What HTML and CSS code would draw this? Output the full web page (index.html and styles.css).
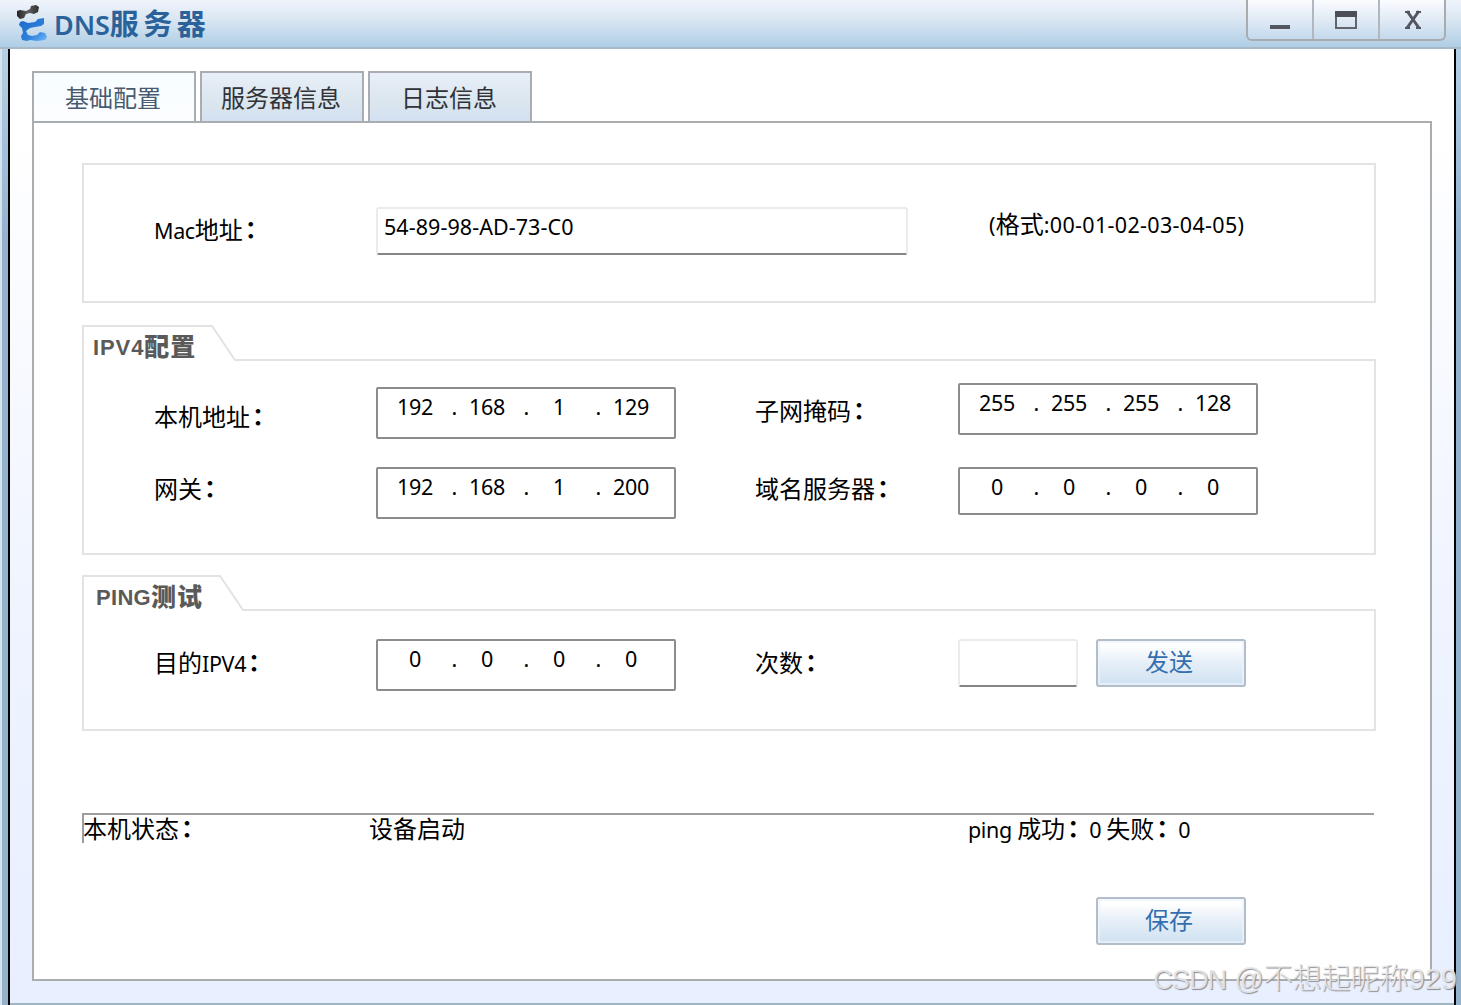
FILE: index.html
```html
<!DOCTYPE html>
<html lang="zh-CN">
<head>
<meta charset="utf-8">
<title>DNS服务器</title>
<link rel="stylesheet" href="styles.css">
</head>
<body>
<div class="window">
  <header class="titlebar">
    <svg class="logo" width="34" height="40" viewBox="0 0 34 40">
      <defs>
        <linearGradient id="dark" x2="1" y2="0"><stop stop-color="#242424"/><stop offset=".5" stop-color="#606060"/><stop offset="1" stop-color="#303030"/></linearGradient>
        <linearGradient id="blue" x2="1" y2="1"><stop stop-color="#1b69c8"/><stop offset=".6" stop-color="#2d80da"/><stop offset="1" stop-color="#72bafc"/></linearGradient>
      </defs>
      <path d="M0 8l3-1 6 1 4-2 1-3 5-1 3 2-1 5-4 2-4-1-4 1-2 4-4 1-3-3z" fill="url(#dark)"/>
      <path d="M3 19l3-1 5 2 7-1 3-3 6-1v6l-3 2-6 1-5 1-4 3 2 4 4 1 5-1 3-3 5 1 2 4-2 3-8 1-7-1-3 1-5-1-1-4 2-3-1-5-3-3z" fill="url(#blue)"/>
    </svg>
    <h1 class="title"><span class="title-latin">DNS</span>服务器</h1>
    <div class="controls">
      <button class="control" aria-label="最小化"><svg width="20" height="24" viewBox="0 0 20 24"><path d="M0 18h20v4H0z" fill="#54565f"/></svg></button>
      <button class="control" aria-label="最大化"><svg width="22" height="24" viewBox="0 0 22 24"><path d="M1 5h20v16H1z" fill="none" stroke="#63656e" stroke-width="2"/><path d="M0 4h22v6H0z" fill="#4c4d57"/></svg></button>
      <button class="control" aria-label="关闭"><svg width="18" height="24" viewBox="0 0 18 24"><path d="M3 4l12 17M15 4L3 21" stroke="#53565f" stroke-width="3"/><path d="M1 5h5M12 5h5M1 21h5M12 21h5" stroke="#53565f" stroke-width="2"/></svg></button>
    </div>
  </header>
  <main class="client">
    <nav class="tabs">
      <a class="tab tab-active">基础配置</a>
      <a class="tab">服务器信息</a>
      <a class="tab">日志信息</a>
    </nav>
    <div class="panel">
      <section class="group group-mac">
        <label class="label"><span class="latin">Mac</span>地址<span class="colon">：</span></label>
        <div class="edit edit-mac">54-89-98-AD-73-C0</div>
        <div class="hint"><span class="latin">(</span>格式<span class="latin">:00-01-02-03-04-05)</span></div>
      </section>

      <section class="tabbed">
        <div class="group-head">
          <h2 class="caption caption-ipv4"><span class="caption-latin">IPV4</span>配置</h2>
          <svg class="slope" width="25" height="36" viewBox="0 0 25 36"><path d="M0 1h1l23 34h1" fill="none" stroke="#e3e3e3" stroke-width="2"/></svg>
          <div class="head-rule"></div>
        </div>
        <div class="group-body body-ipv4">
          <label class="label label-host">本机地址<span class="colon">：</span></label>
          <div class="ip"><b>192</b><i>.</i><b>168</b><i>.</i><b>1</b><i>.</i><b>129</b></div>
          <label class="label label-mask">子网掩码<span class="colon">：</span></label>
          <div class="ip ip-mask"><b>255</b><i>.</i><b>255</b><i>.</i><b>255</b><i>.</i><b>128</b></div>
          <label class="label">网关<span class="colon">：</span></label>
          <div class="ip"><b>192</b><i>.</i><b>168</b><i>.</i><b>1</b><i>.</i><b>200</b></div>
          <label class="label">域名服务器<span class="colon">：</span></label>
          <div class="ip ip-dns"><b>0</b><i>.</i><b>0</b><i>.</i><b>0</b><i>.</i><b>0</b></div>
        </div>
      </section>

      <section class="tabbed tabbed-ping">
        <div class="group-head">
          <h2 class="caption caption-ping"><span class="caption-latin">PING</span>测试</h2>
          <svg class="slope" width="25" height="36" viewBox="0 0 25 36"><path d="M0 1h1l23 34h1" fill="none" stroke="#e3e3e3" stroke-width="2"/></svg>
          <div class="head-rule"></div>
        </div>
        <div class="group-body body-ping">
          <label class="label">目的<span class="latin">IPV4</span><span class="colon">：</span></label>
          <div class="ip"><b>0</b><i>.</i><b>0</b><i>.</i><b>0</b><i>.</i><b>0</b></div>
          <label class="label">次数<span class="colon">：</span></label>
          <div class="send">
            <div class="edit edit-count"></div>
            <button class="button">发送</button>
          </div>
        </div>
      </section>

      <div class="status">
        <span class="status-name">本机状态<span class="colon">：</span></span>
        <span class="status-value">设备启动</span>
        <span class="status-ping"><span class="latin">ping </span>成功<span class="colon">：</span><span class="latin">0 </span>失败<span class="colon">：</span><span class="latin">0</span></span>
      </div>
      <button class="button button-save">保存</button>
    </div>
  </main>
  <div class="watermark"><span class="watermark-site">CSDN</span> @不想起昵称929</div>
</div>
</body>
</html>
```
FILE: styles.css
```css
* {
  box-sizing: border-box;
}

body {
  margin: 0;
  font: 24px/28px "Noto Sans CJK SC", sans-serif;
  color: #000;
}

.window {
  position: relative;
  width: 1461px;
  height: 1005px;
  overflow: hidden;
  display: flex;
  flex-direction: column;
  padding: 0 5px 0 8px;
  background:
    linear-gradient(90deg, #d5e2ec 0 2px, transparent 2px),
    linear-gradient(#edf3fb 0, #b4d0e7 47px, #92b2cf 240px, #94b2cb 100%);
}

.titlebar {
  flex: none;
  display: flex;
  align-items: flex-start;
  height: 49px;
  margin: 0 -5px 0 -8px;
  padding: 0 15px 0 17px;
  border-bottom: 2px solid #a8b9c8;
  background: linear-gradient(#f0f4fb 0, #d9e6f2 20px, #afcee6 100%);
}

.logo {
  flex: none;
  margin-top: 3px;
}

.title {
  flex: 1;
  margin: 4px 0 0 3px;
  font-size: 29px;
  line-height: 36px;
  font-weight: 700;
  letter-spacing: 4.5px;
  color: #2b6299;
}

.title-latin {
  font-family: "Noto Sans", sans-serif;
  font-size: 27px;
  font-weight: 600;
  letter-spacing: -.1px;
}

.controls {
  display: flex;
  height: 41px;
  border: 2px solid #a9abae;
  border-top: 0;
  border-radius: 0 0 6px 6px;
  background: linear-gradient(#fbfcfe, #e0eaf5 20px, #c3d9ed);
}

.control {
  display: flex;
  justify-content: center;
  width: 66px;
  padding: 7px 0 0;
  border: 0;
  border-right: 2px solid #b0b7c0;
  background: none;
}

.control:last-child {
  width: 64px;
  padding-left: 2px;
  border-right: 0;
}

.client {
  flex: none;
  height: 956px;
  padding: 22px 22px 0;
  border: solid #000;
  border-width: 0 2px;
  box-shadow: inset 0 -2px #a1b5c3;
  background: linear-gradient(#fff 80px, #eef3ff 600px, #e8efff);
}

.tabs {
  display: flex;
  gap: 4px;
}

.tab {
  width: 164px;
  height: 50px;
  padding-right: 2px;
  border: 2px solid #a9adb1;
  border-bottom: 0;
  line-height: 47px;
  text-align: center;
  color: #303338;
  background: linear-gradient(#e8eff9, #dbe6ee 60%, #d3e0f2);
}

.tab-active {
  color: #475a70;
  background: linear-gradient(#f7fdff, #fcfdff);
}

.panel {
  width: 1400px;
  height: 860px;
  padding: 40px 54px 0 48px;
  border: 2px solid #a9adb0;
  background: #fff;
}

.latin,
.edit,
.ip {
  font-family: "Noto Sans", sans-serif;
  font-size: 21.5px;
  letter-spacing: -.35px;
}

.label {
  white-space: nowrap;
}

.colon {
  position: relative;
  top: -1px;
  left: 2px;
  font-weight: 700;
}

.group {
  display: grid;
  grid-template-columns: 222px 613px 1fr;
  align-items: start;
  width: 1294px;
  height: 140px;
  padding: 42px 0 0 70px;
  border: 2px solid #e3e3e3;
}

.group-mac .label {
  margin-top: 8px;
}

.hint {
  margin-top: 2px;
  white-space: nowrap;
}

.hint .latin {
  letter-spacing: .32px;
}

.edit {
  height: 48px;
  padding: 4px 6px;
  border: 2px solid #ebebeb;
  border-bottom-color: #858585;
  border-radius: 3px;
  background: #fff;
}

.edit-mac {
  width: 532px;
  letter-spacing: .07px;
}

.tabbed {
  width: 1294px;
  height: 230px;
  margin-top: 22px;
  display: flex;
  flex-direction: column;
}

.tabbed-ping {
  height: 156px;
  margin-top: 20px;
}

.group-head {
  display: flex;
  height: 36px;
}

.caption {
  margin: 0;
  padding: 4px 0 0 9px;
  border: solid #e3e3e3;
  border-width: 2px 0 0 2px;
  font-size: 25px;
  line-height: 29px;
  font-weight: 900;
  letter-spacing: 1px;
  color: #5a5a5a;
  white-space: nowrap;
}

.caption-ipv4 {
  width: 129px;
}

.caption-ping {
  width: 137px;
  padding-left: 12px;
}

.caption-latin {
  position: relative;
  top: -1px;
  font-family: "Liberation Sans", Arial, sans-serif;
  font-size: 22px;
  font-weight: 700;
  letter-spacing: .9px;
}

.caption-ping .caption-latin {
  letter-spacing: .3px;
}

.head-rule {
  flex: 1;
  border-bottom: 2px solid #e3e3e3;
}

.group-body {
  flex: 1;
  display: grid;
  grid-template-columns: 222px 379px 203px 1fr;
  align-items: start;
  padding-left: 70px;
  border: 2px solid #e3e3e3;
  border-top: 0;
}

.body-ipv4 {
  grid-template-rows: 80px 1fr;
  padding-top: 26px;
}

.body-ping {
  padding-top: 28px;
}

.group-body .label {
  margin-top: 7px;
}

.body-ping .label {
  margin-top: 9px;
}

.group-body .label-host {
  margin-top: 15px;
}

.group-body .label-mask {
  margin-top: 9px;
}

.ip {
  display: flex;
  width: 300px;
  height: 52px;
  padding-left: 7px;
  border: 2px solid #8c8c8c;
  border-radius: 2px;
  line-height: 35px;
}

.ip b {
  width: 60px;
  font-weight: 400;
  text-align: center;
}

.ip i {
  width: 12px;
  font-style: normal;
  text-align: right;
}

.ip-mask {
  margin-top: -4px;
}

.ip-dns {
  height: 48px;
}

.send {
  display: flex;
  gap: 18px;
}

.edit-count {
  width: 120px;
}

.button {
  width: 150px;
  height: 48px;
  padding: 0 4px 4px 0;
  border: 2px solid #b3bdc9;
  border-radius: 3px;
  box-shadow: inset 0 0 0 2px rgba(235, 243, 251, .7);
  font: 24px/40px "Noto Sans CJK SC", sans-serif;
  color: #346fad;
  background: linear-gradient(#fff 10%, #e8f0f8 45%, #cfe1f1);
}

.status {
  display: grid;
  grid-template-columns: 286px 598px 1fr;
  width: 1292px;
  height: 30px;
  margin-top: 82px;
  border-top: 2px solid #9d9d9d;
  border-left: 2px solid #9d9d9d;
  line-height: 26px;
  white-space: pre;
}

.status-name,
.status-value {
  margin-left: -1px;
}

.button-save {
  display: block;
  margin: 54px 0 0 1014px;
}

.watermark {
  position: absolute;
  right: 4px;
  bottom: 5px;
  font: 29px/40px "Liberation Sans", "Noto Sans CJK SC", sans-serif;
  font-weight: 300;
  color: rgba(232, 232, 235, .9);
  text-shadow: 1px 1px 1px #8b8d92;
  white-space: nowrap;
}

.watermark-site {
  font-size: 27px;
  letter-spacing: -.9px;
}
```
